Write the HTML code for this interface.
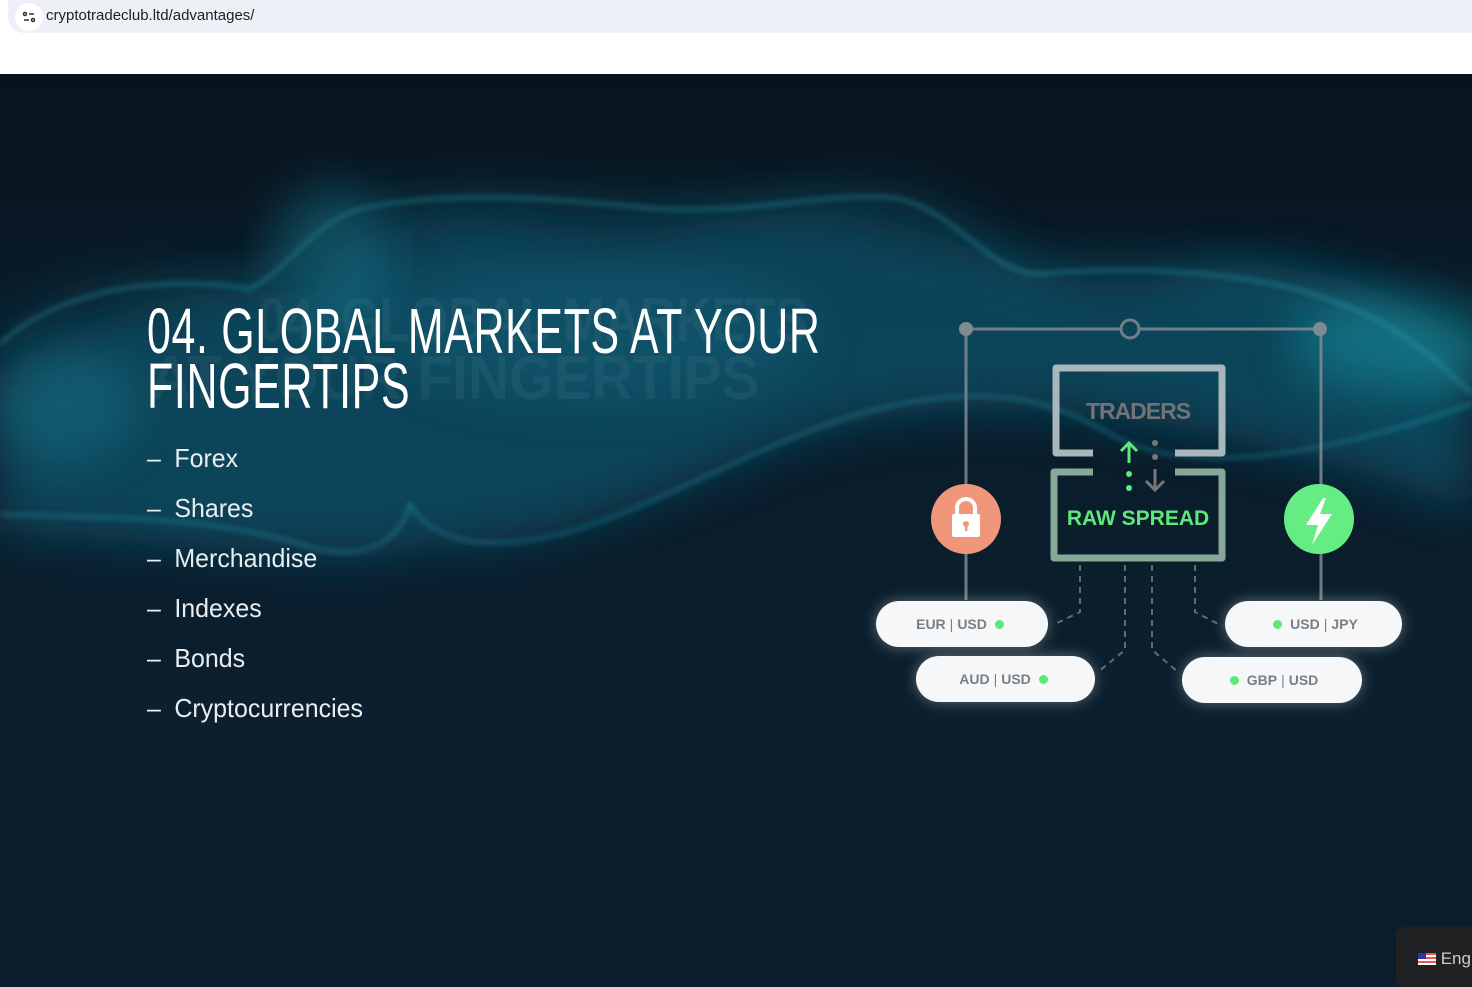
<!DOCTYPE html>
<html><head><meta charset="utf-8">
<style>
*{margin:0;padding:0;box-sizing:border-box}
body{width:1472px;height:980px;overflow:hidden;background:#0b1e2c;font-family:"Liberation Sans",sans-serif;position:relative}
.bar{position:absolute;left:0;top:0;width:1472px;height:74px;background:#fff}
.url{position:absolute;left:8px;top:0;width:1470px;height:33px;background:#eef0f8;border-radius:0 0 0 16px}
.url .ic{position:absolute;left:7px;top:3px;width:28px;height:28px;border-radius:50%;background:#fff}
.url span{position:absolute;left:38px;top:7px;font-size:15px;color:#1f1f1f}
.bg{position:absolute;left:0;top:74px;width:1472px;height:906px;overflow:hidden;background:linear-gradient(180deg,#08131d 0%,#0a1c2a 30%,#0b1f2e 70%,#0a1d2b 100%)}
h1{position:absolute;left:147px;top:304px;font-weight:400;font-size:64px;line-height:55px;color:#fff;transform:scaleX(0.67);transform-origin:top left;white-space:nowrap;letter-spacing:1px}
.ghost{position:absolute;font-size:62px;font-weight:700;color:rgba(255,255,255,0.05);line-height:58px;white-space:nowrap;transform-origin:left top}
ul{position:absolute;left:147px;top:440px;list-style:none}
li{font-size:26px;color:#e8eef2;height:50px;line-height:36px;transform:scaleX(0.96);transform-origin:left}
li:before{content:"–";margin-right:14px}
.pill{position:absolute;height:46px;border-radius:23px;background:#f6f7f8;box-shadow:0 0 14px rgba(255,255,255,0.35);font-weight:700;font-size:14px;color:#7a7f83;display:flex;align-items:center;justify-content:center;gap:4px}
.dot{width:9px;height:9px;border-radius:50%;background:#5ee87a;display:inline-block;margin:0 4px}
.lang{position:absolute;left:1396px;top:927px;width:90px;height:60px;background:#1f2122;border-radius:8px;color:#ccc;font-size:17px;padding:22px 0 0 22px}
</style></head><body>
<div class="bar"><div class="url"><div class="ic"><svg width="28" height="28"><g stroke="#333" stroke-width="1.5" fill="none"><circle cx="10" cy="11" r="1.5"/><line x1="14" y1="11" x2="19" y2="11"/><line x1="9" y1="17" x2="14" y2="17"/><circle cx="18" cy="17" r="1.5"/></g></svg></div><span>cryptotradeclub.ltd/advantages/</span></div></div>
<div class="bg">
<svg width="1472" height="906" style="position:absolute;left:0;top:0">
<defs>
<filter id="b1" x="-20%" y="-50%" width="140%" height="200%"><feGaussianBlur stdDeviation="24"/></filter>
<filter id="b3" x="-10%" y="-10%" width="120%" height="120%"><feGaussianBlur stdDeviation="3"/></filter>
</defs>
<path d="M0 300 C120 220 250 200 320 230 C300 160 420 130 560 150 C700 170 760 120 900 150 C1000 180 1080 230 1180 200 C1300 170 1400 220 1472 270 L1472 440 C1380 400 1300 380 1200 360 C1050 330 900 320 760 380 C620 440 520 480 420 470 C380 500 200 470 0 460 Z" fill="#104c62" opacity="0.85" filter="url(#b1)"/>
<path d="M0 270 C60 215 160 200 250 215 C290 195 310 150 360 135 C450 115 560 125 660 135 C760 140 840 115 900 125 C960 140 990 200 1040 200 C1150 190 1270 200 1340 230 C1400 250 1440 290 1472 320" fill="none" stroke="#1a9fb2" stroke-width="14" opacity="0.35" filter="url(#b1)"/>
<path d="M0 270 C60 215 160 200 250 215 C290 195 310 150 360 135 C450 115 560 125 660 135 C760 140 840 115 900 125 C960 140 990 200 1040 200 C1150 190 1270 200 1340 230 C1400 250 1440 290 1472 320" fill="none" stroke="#3cc8d6" stroke-width="2" opacity="0.6" filter="url(#b3)"/>
<path d="M0 440 C100 445 200 440 300 470 C360 490 400 470 410 430 C440 480 520 480 620 440 C720 400 800 350 900 330 C1000 310 1060 330 1110 360 C1180 400 1300 390 1472 330" fill="none" stroke="#2fb8c8" stroke-width="2" opacity="0.6" filter="url(#b3)"/>
<ellipse cx="1400" cy="270" rx="110" ry="50" fill="#1fb5c0" opacity="0.35" filter="url(#b1)"/>
<ellipse cx="330" cy="190" rx="60" ry="80" fill="#1a8aa0" opacity="0.35" filter="url(#b1)"/>
<ellipse cx="60" cy="330" rx="80" ry="60" fill="#1a8aa0" opacity="0.3" filter="url(#b1)"/>
<ellipse cx="600" cy="260" rx="220" ry="70" fill="#137088" opacity="0.3" filter="url(#b1)"/>
</svg>
</div>
<div class="ghost" style="top:292px;left:258px;transform:scaleX(0.8)">04. GLOBAL MARKETS</div>
<div class="ghost" style="top:350px;left:150px;transform:scaleX(0.92)">AT YOUR FINGERTIPS</div>
<h1>04. GLOBAL MARKETS AT YOUR<br>FINGERTIPS</h1>
<ul><li>Forex</li><li>Shares</li><li>Merchandise</li><li>Indexes</li><li>Bonds</li><li>Cryptocurrencies</li></ul>
<svg width="1472" height="980" style="position:absolute;left:0;top:0">
<g stroke="#7f8b92" stroke-width="3" fill="none" opacity="0.85">
<line x1="966" y1="329" x2="1120" y2="329"/><line x1="1140" y1="329" x2="1320" y2="329"/>
<line x1="966" y1="329" x2="966" y2="600"/><line x1="1321" y1="329" x2="1321" y2="600"/>
<circle cx="1130" cy="329" r="9"/>
</g>
<circle cx="966" cy="329" r="7" fill="#7f8b92"/><circle cx="1320" cy="329" r="7" fill="#7f8b92"/>
<path d="M1093 453 H1056 V368 H1222 V453 H1175" stroke="#a9b6bc" stroke-width="7" fill="none" stroke-linejoin="round"/>
<path d="M1093 472 H1054 V558 H1222 V472 H1175" stroke="#86a898" stroke-width="7" fill="none" stroke-linejoin="round"/>
<text x="1138" y="419" text-anchor="middle" font-family="Liberation Sans" font-weight="700" font-size="23" fill="#707478" letter-spacing="-1">TRADERS</text>
<text x="1138" y="525" text-anchor="middle" font-family="Liberation Sans" font-weight="700" font-size="21" fill="#5fe87b">RAW SPREAD</text>
<g stroke="#5fe87b" stroke-width="3" fill="none"><line x1="1129" y1="443" x2="1129" y2="463"/><polyline points="1121,451 1129,443 1137,451"/></g>
<circle cx="1129" cy="474" r="3" fill="#5fe87b"/><circle cx="1129" cy="488" r="3" fill="#5fe87b"/>
<circle cx="1155" cy="443" r="3" fill="#777"/><circle cx="1155" cy="457" r="3" fill="#777"/>
<g stroke="#777" stroke-width="3" fill="none"><line x1="1155" y1="469" x2="1155" y2="490"/><polyline points="1146,481 1155,490 1164,481"/></g>
<g stroke="#5f6c72" stroke-width="2" stroke-dasharray="6 5" fill="none">
<polyline points="1080,565 1080,612 1055,624"/>
<polyline points="1125,565 1125,650 1098,672"/><polyline points="1152,565 1152,650 1178,672"/>
<polyline points="1195,565 1195,612 1222,626"/>
</g>
<circle cx="966" cy="519" r="35" fill="#f0967a"/>
<rect x="952" y="514" width="28" height="23" rx="2" fill="#fff"/><path d="M957 515 v-7 a9 9 0 0 1 18 0 v7" stroke="#fff" stroke-width="4" fill="none"/>
<circle cx="966" cy="524" r="3" fill="#f0967a"/><rect x="965" y="525" width="2.5" height="6" fill="#f0967a"/>
<circle cx="1319" cy="519" r="35" fill="#65ec82"/>
<path d="M1323 498 L1306 525 L1318 525 L1312 545 L1332 514 L1320 514 L1326 498 Z" fill="#fff"/>
</svg>
<div class="pill" style="left:876px;top:601px;width:172px">EUR <span style="font-weight:400">|</span> USD <span class="dot"></span></div>
<div class="pill" style="left:916px;top:656px;width:179px">AUD <span style="font-weight:400">|</span> USD <span class="dot"></span></div>
<div class="pill" style="left:1225px;top:601px;width:177px"><span class="dot"></span> USD <span style="font-weight:400">|</span> JPY</div>
<div class="pill" style="left:1182px;top:657px;width:180px"><span class="dot"></span> GBP <span style="font-weight:400">|</span> USD</div>
<div class="lang"><span style="display:inline-block;width:18px;height:12px;background:repeating-linear-gradient(#e55 0 2px,#fff 2px 4px);position:relative;vertical-align:-1px"><span style="position:absolute;left:0;top:0;width:8px;height:6px;background:#33a"></span></span> Eng</div>
</body></html>
